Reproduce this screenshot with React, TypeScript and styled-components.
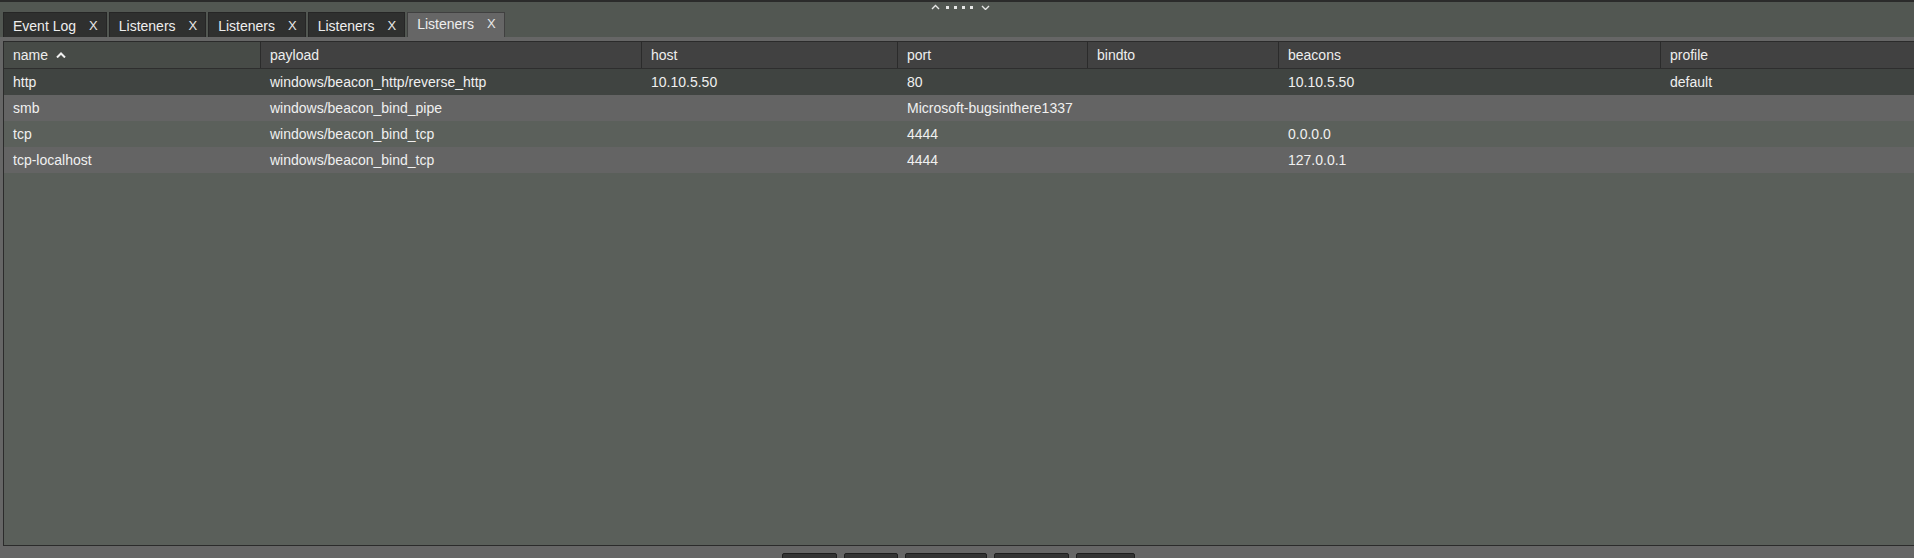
import React from "react"
import styled, { createGlobalStyle } from "styled-components"

const GlobalStyle = createGlobalStyle`
  html, body {
    margin: 0;
    padding: 0;
    background: #525752;
    overflow: hidden;
    font-family: "Liberation Sans", Arial, sans-serif;
  }
`;

const Page = styled.div`
  width: 1914px;
  height: 558px;
  display: flex;
  flex-direction: column;
  background: #525752;
  overflow: hidden;
`;

const Divider = styled.div`
  height: 10px;
  flex-shrink: 0;
  box-sizing: border-box;
  border-top: 2px solid #2b2b2b;
  display: flex;
  justify-content: center;
  align-items: flex-start;
  padding-top: 2px;
`;

const SplitArrows = styled.svg`
  margin-left: 8px;
  display: block;
`;

const TabStrip = styled.div`
  height: 27px;
  flex-shrink: 0;
  display: flex;
  align-items: flex-end;
  gap: 2px;
  padding-left: 3px;
`;

const Tab = styled.div<{ $active?: boolean }>`
  height: 25px;
  box-sizing: border-box;
  display: flex;
  align-items: center;
  padding: ${(p) => (p.$active ? "0 8px 3px 9px" : "1px 8px 0 9px")};
  background: ${(p) => (p.$active ? "#666666" : "#2f302f")};
  border: 1px solid ${(p) => (p.$active ? "#404040" : "#262626")};
  border-bottom: none;
  color: #eeeeee;
  font-size: 14px;
  white-space: nowrap;
`;

const TabClose = styled.span`
  margin-left: 13px;
  font-size: 13px;
  color: #e8e8e8;
`;

const Content = styled.div`
  flex: 1;
  min-height: 0;
  display: flex;
  flex-direction: column;
  background: #666666;
  padding: 4px 0 0 3px;
`;

const ScrollPane = styled.div`
  height: 505px;
  flex-shrink: 0;
  box-sizing: border-box;
  border: 1px solid #2b2b2b;
  border-right: none;
  background: #5a5f5a;
  display: flex;
  flex-direction: column;
`;

const columns = "257px 381px 256px 190px 191px 382px 1fr";

const HeaderRow = styled.div`
  display: grid;
  grid-template-columns: ${columns};
  height: 27px;
  flex-shrink: 0;
  box-sizing: border-box;
  border-bottom: 1px solid #2e2e2e;
  background: #414141;
`;

const HeaderCell = styled.div<{ $sorted?: boolean }>`
  display: flex;
  align-items: center;
  gap: 8px;
  padding-left: 9px;
  box-sizing: border-box;
  border-right: 1px solid #2b2b2b;
  background: ${(p) => (p.$sorted ? "#474b47" : "transparent")};
  color: #eeeeee;
  font-size: 14px;
  &:last-child {
    border-right: none;
  }
`;

const Row = styled.div<{ $tone: "selected" | "light" | "base" }>`
  display: grid;
  grid-template-columns: ${columns};
  height: 26px;
  flex-shrink: 0;
  background: ${(p) =>
    p.$tone === "selected" ? "#404441" : p.$tone === "light" ? "#646464" : "#5b605b"};
`;

const Cell = styled.div`
  display: flex;
  align-items: center;
  padding-left: 9px;
  color: #f0f0f0;
  font-size: 14px;
  white-space: nowrap;
  overflow: hidden;
`;

const ButtonBar = styled.div`
  display: flex;
  justify-content: center;
  gap: 7px;
  padding-top: 7px;
  flex-shrink: 0;
`;

const Button = styled.button`
  height: 28px;
  padding: 0 14px;
  background: #333333;
  border: 1px solid #1e1e1e;
  border-radius: 2px;
  color: #eeeeee;
  font-family: "Liberation Sans", Arial, sans-serif;
  font-size: 14px;
`;

const tabs = ["Event Log", "Listeners", "Listeners", "Listeners", "Listeners"];

const headers = ["name", "payload", "host", "port", "bindto", "beacons", "profile"];

const listeners = [
  ["http", "windows/beacon_http/reverse_http", "10.10.5.50", "80", "", "10.10.5.50", "default"],
  ["smb", "windows/beacon_bind_pipe", "", "Microsoft-bugsinthere1337", "", "", ""],
  ["tcp", "windows/beacon_bind_tcp", "", "4444", "", "0.0.0.0", ""],
  ["tcp-localhost", "windows/beacon_bind_tcp", "", "4444", "", "127.0.0.1", ""],
];

const SortUp = () => (
  <svg width="10" height="6" viewBox="0 0 10 6">
    <polyline points="1,5.5 5,1.5 9,5.5" fill="none" stroke="#f0f0f0" strokeWidth="2" />
  </svg>
);

export default function App() {
  return (
    <Page>
      <GlobalStyle />
      <Divider>
        <SplitArrows width="60" height="6" viewBox="0 0 60 6">
          <polyline points="1,5 4.5,1.5 8,5" fill="none" stroke="#e6e6e6" strokeWidth="1.4" />
          {[15, 23, 31, 39].map((x) => (
            <rect key={x} x={x} y="2" width="3" height="3" fill="#e6e6e6" />
          ))}
          <polyline points="51,2 54.5,5.5 58,2" fill="none" stroke="#e6e6e6" strokeWidth="1.4" />
        </SplitArrows>
      </Divider>
      <TabStrip>
        {tabs.map((t, i) => (
          <Tab key={i} $active={i === tabs.length - 1}>
            {t}
            <TabClose>X</TabClose>
          </Tab>
        ))}
      </TabStrip>
      <Content>
        <ScrollPane>
          <HeaderRow>
            {headers.map((h, i) => (
              <HeaderCell key={h} $sorted={i === 0}>
                {h}
                {i === 0 && <SortUp />}
              </HeaderCell>
            ))}
          </HeaderRow>
          {listeners.map((row, i) => (
            <Row key={row[0]} $tone={i === 0 ? "selected" : i % 2 === 1 ? "light" : "base"}>
              {row.map((v, j) => (
                <Cell key={j}>{v}</Cell>
              ))}
            </Row>
          ))}
        </ScrollPane>
        <ButtonBar>
          <Button>Add</Button>
          <Button>Edit</Button>
          <Button>Remove</Button>
          <Button>Restart</Button>
          <Button>Help</Button>
        </ButtonBar>
      </Content>
    </Page>
  )
}
